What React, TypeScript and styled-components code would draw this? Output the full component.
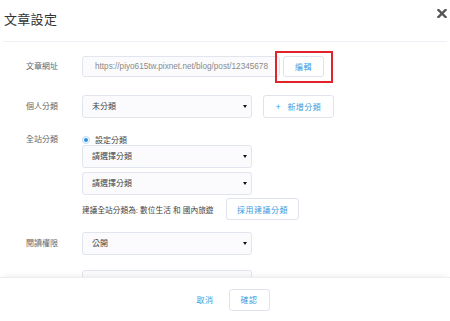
import React from 'react'
import styled, { createGlobalStyle } from 'styled-components'

const GlobalStyle = createGlobalStyle`
    html, body {
        margin: 0;
        padding: 0;
        width: 450px;
        height: 321px;
        overflow: hidden;
        background: #fff;
        font-family: "Liberation Sans", "Noto Sans CJK TC", sans-serif;
    }
`

const Modal = styled.div`
    display: flex;
    flex-direction: column;
    width: 450px;
    height: 321px;
    background: #fff;
`
const Header = styled.div`
    height: 41px;
    margin: 0 3px;
    border-bottom: 1px solid #eef0f5;
    display: flex;
    align-items: center;
    justify-content: space-between;
    position: relative;
`
const Title = styled.h1`
    margin: 0 0 4px 1px;
    font-size: 13px;
    font-weight: normal;
    color: #333;
    letter-spacing: 0.3px;
`
const Close = styled.button`
    position: absolute;
    top: 9px;
    right: 0;
    width: 10px;
    height: 9px;
    padding: 0;
    border: none;
    background: none;
    display: flex;
`
const Body = styled.div`
    flex: 1;
    overflow: hidden;
    padding-top: 14px;
`
const FormRow = styled.div<{ $top?: number }>`
    display: flex;
    align-items: flex-start;
    margin-top: ${(p) => p.$top || 0}px;
`
const Label = styled.div<{ $h?: number }>`
    width: 56px;
    padding-left: 26px;
    height: ${(p) => p.$h || 23}px;
    line-height: ${(p) => p.$h || 23}px;
    font-size: 8px;
    color: #666;
    flex-shrink: 0;
`
const Field = styled.div`
    display: flex;
    flex-direction: column;
`
const Inline = styled.div<{ $gap: number; $mt?: number }>`
    display: flex;
    align-items: center;
    gap: ${(p) => p.$gap}px;
    margin-top: ${(p) => p.$mt || 0}px;
`
const TextInput = styled.div`
    box-sizing: border-box;
    width: 198px;
    height: 21px;
    padding: 0 12px;
    border: 1px solid #e1e5ed;
    border-radius: 3px;
    background: #fbfbfd;
    color: #8a8a8a;
    font-size: 8.2px;
    line-height: 19px;
    white-space: nowrap;
    overflow: hidden;
`
const Select = styled.div<{ $mt?: number }>`
    box-sizing: border-box;
    position: relative;
    width: 170px;
    height: 23px;
    margin-top: ${(p) => p.$mt || 0}px;
    padding: 0 9px;
    border: 1px solid #e1e5ed;
    border-radius: 3px;
    background: #fbfbfd;
    color: #444;
    font-size: 8px;
    line-height: 21px;
    &::after {
        content: '';
        position: absolute;
        right: 4px;
        top: 9px;
        border-left: 2px solid transparent;
        border-right: 2px solid transparent;
        border-top: 3px solid #111;
    }
`
const Button = styled.button<{ $w: number; $h: number }>`
    box-sizing: border-box;
    width: ${(p) => p.$w}px;
    height: ${(p) => p.$h}px;
    padding: 0;
    border: 1px solid #dfe3ec;
    border-radius: 3px;
    background: #fff;
    color: #3d9ce0;
    font-family: inherit;
    font-size: 8px;
    letter-spacing: 0.5px;
    cursor: pointer;
`
const Plus = styled.span`
    margin-right: 6px;
    font-size: 9px;
`
const Highlight = styled.div`
    position: relative;
    display: flex;
`
const RedBox = styled.span`
    position: absolute;
    left: -8px;
    right: -9px;
    top: -5px;
    bottom: -6px;
    border: 2px solid #e3232b;
    pointer-events: none;
`
const RadioLine = styled.label`
    display: flex;
    align-items: center;
    height: 11px;
    font-size: 8px;
    color: #444;
`
const Radio = styled.span`
    box-sizing: border-box;
    width: 8px;
    height: 8px;
    margin-right: 5px;
    border: 1px solid #b9dcf6;
    border-radius: 50%;
    display: flex;
    align-items: center;
    justify-content: center;
    &::after {
        content: '';
        width: 4px;
        height: 4px;
        border-radius: 50%;
        background: #2f8ee0;
    }
`
const Suggest = styled.div`
    width: 140px;
    font-size: 7.7px;
    color: #444;
    white-space: nowrap;
`
const Footer = styled.div`
    height: 43px;
    flex-shrink: 0;
    border-top: 1px solid #eceef3;
    box-shadow: 0 -4px 6px -3px rgba(0, 0, 0, 0.07);
    display: flex;
    align-items: center;
    justify-content: center;
    gap: 15px;
    padding-left: 16px;
    position: relative;
`
const TextButton = styled.button`
    padding: 0;
    border: none;
    background: none;
    color: #3d9ce0;
    font-family: inherit;
    font-size: 8px;
    letter-spacing: 0.5px;
`

export default function App() {
    return (
        <Modal>
            <GlobalStyle />
            <Header>
                <Title>文章設定</Title>
                <Close aria-label="close">
                    <svg width="10" height="9" viewBox="0 0 10 9">
                        <path
                            d="M1.5 1 L8.5 8 M8.5 1 L1.5 8"
                            stroke="#555"
                            strokeWidth="2.4"
                            strokeLinecap="square"
                        />
                    </svg>
                </Close>
            </Header>
            <Body>
                <FormRow>
                    <Label $h={21}>文章網址</Label>
                    <Inline $gap={3}>
                        <TextInput>
                            https://piyo615tw.pixnet.net/blog/post/12345678
                        </TextInput>
                        <Highlight>
                            <Button $w={41} $h={21}>編輯</Button>
                            <RedBox />
                        </Highlight>
                    </Inline>
                </FormRow>
                <FormRow $top={18}>
                    <Label>個人分類</Label>
                    <Inline $gap={11}>
                        <Select>未分類</Select>
                        <Button $w={71} $h={23}>
                            <Plus>+</Plus>新增分類
                        </Button>
                    </Inline>
                </FormRow>
                <FormRow $top={16}>
                    <Label $h={11}>全站分類</Label>
                    <Field>
                        <RadioLine>
                            <Radio />
                            設定分類
                        </RadioLine>
                        <Select>請選擇分類</Select>
                        <Select $mt={4}>請選擇分類</Select>
                        <Inline $gap={4} $mt={3}>
                            <Suggest>建議全站分類為: 數位生活 和 國內旅遊</Suggest>
                            <Button $w={73} $h={22}>採用建議分類</Button>
                        </Inline>
                    </Field>
                </FormRow>
                <FormRow $top={12}>
                    <Label>閱讀權限</Label>
                    <Select>公開</Select>
                </FormRow>
                <FormRow $top={15}>
                    <Label> </Label>
                    <Select />
                </FormRow>
            </Body>
            <Footer>
                <TextButton>取消</TextButton>
                <Button $w={41} $h={22}>確認</Button>
            </Footer>
        </Modal>
    )
}
